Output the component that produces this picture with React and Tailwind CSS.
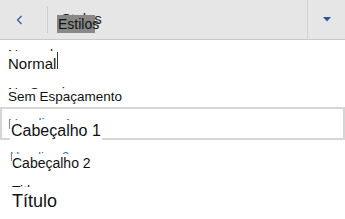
import React from 'react'

const font = { fontFamily: '"Liberation Sans", Arial, sans-serif' }

function Header() {
  return (
    <div className="h-[40px] bg-[#e6e6e6] border-b border-[#c9c9c9] flex">
      <div className="w-[47px] flex items-center pl-[16px]">
        <svg width="8" height="10" viewBox="0 0 8 10" fill="none">
          <polyline points="5.5,1 1.5,5 5.5,9" stroke="#2b579a" strokeWidth="1.2" />
        </svg>
      </div>
      <div className="w-px h-[27px] mt-[6px] bg-[#d0d0d0]" />
      <div className="flex-1 relative">
        <span className="block pl-[13px] pt-[11px] text-[15px] leading-none text-[#222]">Styles</span>
        <div className="absolute left-[9px] top-[15px] w-[38px] h-[18px] bg-[#888888]">
          <span className="block pl-[1px] text-[14px] leading-[18px] text-[#111] whitespace-nowrap">Estilos</span>
        </div>
      </div>
      <div className="w-[38px] border-l border-[#d3d3d3] flex items-center justify-center">
        <svg width="8" height="5" viewBox="0 0 8 5">
          <polygon points="0,0 8,0 4,4.5" fill="#2b579a" />
        </svg>
      </div>
    </div>
  )
}

export default function App() {
  return (
    <div className="w-[345px] h-[219px] bg-white overflow-hidden" style={font}>
      <Header />

      <div className="relative h-[39px] pl-[8px] pt-[8px]">
        <span className="block text-[14px] leading-none text-[#222]">Normal</span>
        <div className="absolute left-[6px] top-[11px] h-[22px] bg-white pl-[2px] flex items-start">
          <span className="block pt-[4px] text-[15px] leading-[18px] text-[#111]">Normal</span>
          <span className="block w-px h-[17px] mt-[1px] ml-[1px] bg-[#333]" />
        </div>
      </div>

      <div className="relative h-[28px] pl-[8px] pt-[7px]">
        <span className="block text-[14px] leading-none text-[#222]">No Spacing</span>
        <div className="absolute left-[6px] top-[10px] h-[17px] bg-white pl-[2px]">
          <span className="block text-[13.5px] leading-[16px] text-[#111] whitespace-nowrap">Sem Espaçamento</span>
        </div>
      </div>

      <div className="relative h-[33px] border-2 border-[#d6d6d6] pl-[6px] pt-[8px]">
        <span className="block text-[14px] leading-none text-[#2e74b5]">Heading 1</span>
        <div className="absolute left-[8px] top-[11px] h-[21px] bg-white px-[1px] pt-[2px]">
          <span className="block text-[16px] leading-[18px] text-[#111] whitespace-nowrap">Cabeçalho 1</span>
        </div>
      </div>

      <div className="relative h-[38px] pl-[10px] pt-[10px]">
        <span className="block text-[13px] leading-none text-[#2e74b5]">Heading 2</span>
        <div className="absolute left-[12px] top-[14px] h-[18px] bg-white pt-[1px]">
          <span className="block text-[14px] leading-[16px] text-[#111] whitespace-nowrap">Cabeçalho 2</span>
        </div>
      </div>

      <div className="relative h-[41px] pl-[12px] pt-[6px]">
        <span className="block text-[14px] leading-none text-[#111]">Title</span>
        <div className="absolute left-[11px] top-[9px] h-[26px] bg-white pl-[1px] pt-[4px]">
          <span className="block text-[18px] leading-[20px] text-[#111]">Título</span>
        </div>
      </div>
    </div>
  )
}
